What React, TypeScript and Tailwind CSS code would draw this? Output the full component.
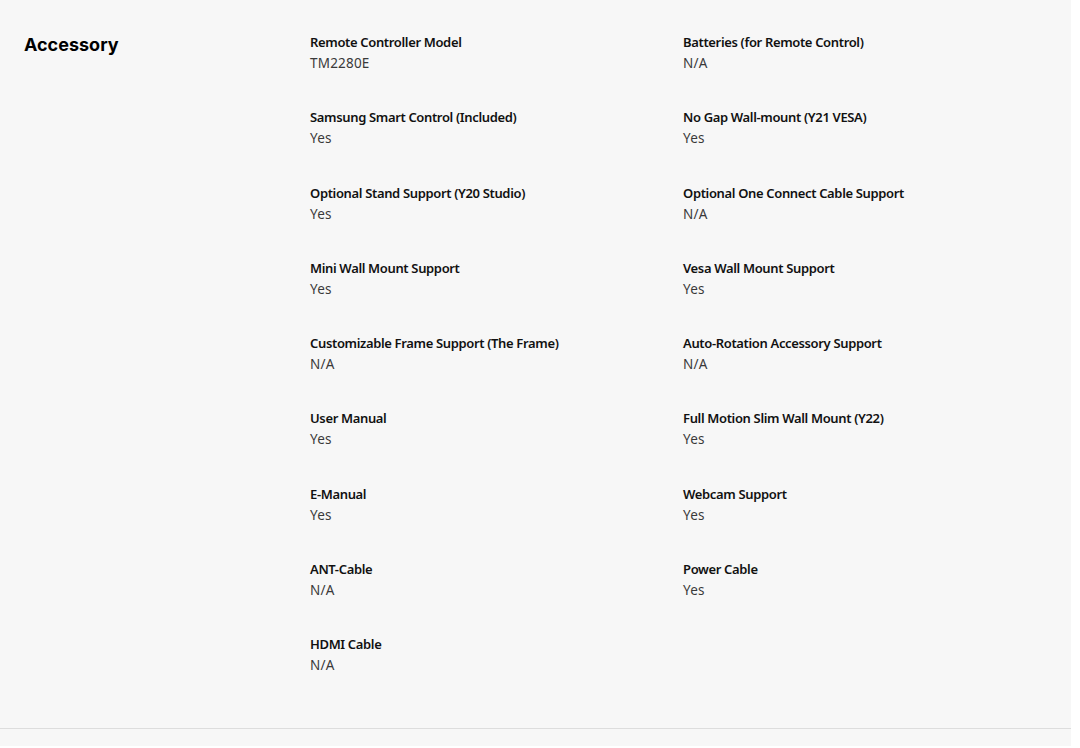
import React from "react";

const items: [string, string][] = [
  ["Remote Controller Model", "TM2280E"],
  ["Batteries (for Remote Control)", "N/A"],
  ["Samsung Smart Control (Included)", "Yes"],
  ["No Gap Wall-mount (Y21 VESA)", "Yes"],
  ["Optional Stand Support (Y20 Studio)", "Yes"],
  ["Optional One Connect Cable Support", "N/A"],
  ["Mini Wall Mount Support", "Yes"],
  ["Vesa Wall Mount Support", "Yes"],
  ["Customizable Frame Support (The Frame)", "N/A"],
  ["Auto-Rotation Accessory Support", "N/A"],
  ["User Manual", "Yes"],
  ["Full Motion Slim Wall Mount (Y22)", "Yes"],
  ["E-Manual", "Yes"],
  ["Webcam Support", "Yes"],
  ["ANT-Cable", "N/A"],
  ["Power Cable", "Yes"],
  ["HDMI Cable", "N/A"],
];

export default function App() {
  return (
    <div className="w-[1080px] h-[748px] bg-white overflow-hidden">
      <div className="w-[1071px] h-[746px] bg-[#f7f7f7] flex flex-col">
        <div className="flex h-[729px] border-b border-[#dddddd] pt-[32px]">
          <div className="w-[310px] shrink-0 pl-[24px]">
            <h2
              className="text-[18px] leading-[26px] font-bold text-black"
              style={{ fontFamily: "Inter, 'Noto Sans', sans-serif" }}
            >
              Accessory
            </h2>
          </div>
          <div
            className="grid grid-cols-[373px_1fr] gap-y-[33.25px] content-start"
            style={{ fontFamily: "'Noto Sans', 'Open Sans', sans-serif" }}
          >
            {items.map(([label, value]) => (
              <div key={label} className="flex flex-col">
                <div className="text-[13px] leading-[20px] font-semibold tracking-[-0.35px] text-[#111111]">
                  {label}
                </div>
                <div className="mt-[1px] text-[13.5px] leading-[21px] text-[#3a3a3a] tracking-[0.2px]">{value}</div>
              </div>
            ))}
          </div>
        </div>
      </div>
    </div>
  );
}
